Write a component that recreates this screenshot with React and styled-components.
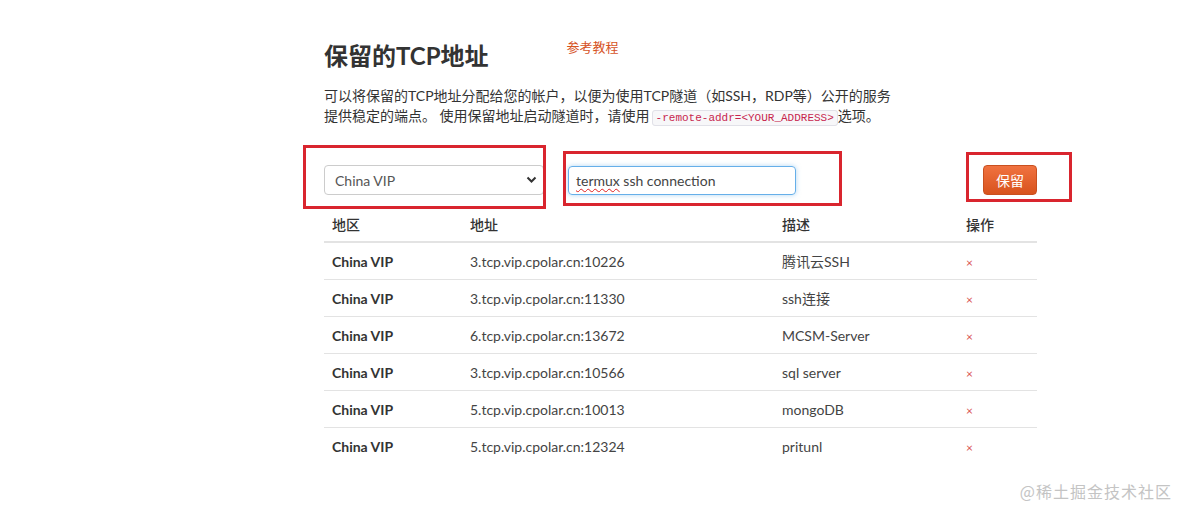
import React from 'react';
import styled, { createGlobalStyle } from 'styled-components';

const GlobalStyle = createGlobalStyle`
  html, body {
    margin: 0;
    padding: 0;
    background: #fff;
  }
  body {
    font-family: Lato, "Noto Sans CJK SC", sans-serif;
    color: #333;
  }
`;

const Page = styled.div`
  position: relative;
  width: 1184px;
  height: 509px;
  overflow: hidden;
  background: #fff;
`;

const Content = styled.div`
  width: 713px;
  margin-left: 324px;
  padding-top: 38px;
`;

// Title block
const TitleRow = styled.div`
  display: flex;
  align-items: flex-start;
  gap: 78px;
`;

const Title = styled.h1`
  margin: 0;
  font-size: 24px;
  font-weight: 700;
  line-height: 36px;
  color: #333;
`;

const GuideLink = styled.a`
  margin-top: -1px;
  font-size: 13px;
  color: #d6531f;
  text-decoration: none;
`;

const Intro = styled.p`
  margin: 12px 0 0;
  font-size: 14px;
  line-height: 20px;
  color: #333;
`;

const Code = styled.code`
  font-family: "Liberation Mono", monospace;
  font-size: 11px;
  color: #c7254e;
  background: #f7f7f9;
  border: 1px solid #e1e1e8;
  border-radius: 3px;
  padding: 1px 3px;
  margin-left: 2px;
`;

// Form row
const FormRow = styled.div`
  position: relative;
  display: flex;
  align-items: center;
  margin-top: 37px;
  height: 30px;
`;

const SelectBox = styled.div`
  position: relative;
  width: 220px;
  height: 30px;
  box-sizing: border-box;
  border: 1px solid #ccc;
  border-radius: 4px;
  display: flex;
  align-items: center;
  padding-left: 10px;
  font-size: 14px;
  color: #555;
`;

const Chevron = styled.svg`
  position: absolute;
  right: 6px;
  top: 10px;
`;

const FakeInput = styled.div`
  margin-left: 24px;
  width: 228px;
  height: 29px;
  box-sizing: border-box;
  border: 1px solid #66afe9;
  border-radius: 4px;
  box-shadow: 0 0 5px rgba(102, 175, 233, 0.5);
  display: flex;
  align-items: center;
  padding-left: 7px;
  font-size: 14px;
  color: #444;
`;

const Misspelled = styled.span`
  text-decoration: underline wavy #e02020;
  text-decoration-thickness: 1px;
  text-underline-offset: 2px;
`;

const SaveButton = styled.button`
  margin-left: auto;
  width: 54px;
  height: 30px;
  border: 1px solid #c9501f;
  border-radius: 4px;
  background: linear-gradient(#f07240, #d8531d);
  color: #fff;
  font-family: Lato, "Noto Sans CJK SC", sans-serif;
  font-size: 14px;
  cursor: pointer;
`;

// Red annotation frames drawn over the screenshot
const Frame = styled.div`
  position: absolute;
  border: 3px solid #d9252e;
  box-sizing: border-box;
  pointer-events: none;
`;

// Table
const Table = styled.table`
  width: 713px;
  margin-top: 12px;
  border-collapse: collapse;
  table-layout: fixed;
  font-size: 14px;
`;

const Th = styled.th`
  box-sizing: border-box;
  text-align: left;
  font-weight: 500;
  padding: 0 8px;
  height: 35px;
  vertical-align: middle;
  color: #333;
  border-bottom: 2px solid #e3e3e3;
  width: ${p => p.$w}px;
`;

const Td = styled.td`
  padding: 0 8px;
  height: 36px;
  vertical-align: middle;
  color: #444;
  font-weight: ${p => (p.$bold ? 700 : 400)};
  ${p => p.$bold && 'color: #333;'}
`;

const Tr = styled.tr`
  border-top: 1px solid #e3e3e3;
  &:first-child {
    border-top: none;
  }
`;

const Remove = styled.span`
  color: #d9534f;
  font-size: 12px;
`;

const Watermark = styled.div`
  position: absolute;
  right: 12px;
  bottom: 6px;
  font-size: 16px;
  letter-spacing: 1px;
  color: #c4c4c4;
  font-family: "Noto Sans CJK SC", sans-serif;
`;

const rows = [
  ['3.tcp.vip.cpolar.cn:10226', '腾讯云SSH'],
  ['3.tcp.vip.cpolar.cn:11330', 'ssh连接'],
  ['6.tcp.vip.cpolar.cn:13672', 'MCSM-Server'],
  ['3.tcp.vip.cpolar.cn:10566', 'sql server'],
  ['5.tcp.vip.cpolar.cn:10013', 'mongoDB'],
  ['5.tcp.vip.cpolar.cn:12324', 'pritunl'],
];

export default function App() {
  return (
    <Page>
      <GlobalStyle />
      <Content>
        <TitleRow>
          <Title>保留的TCP地址</Title>
          <GuideLink href="#">参考教程</GuideLink>
        </TitleRow>
        <Intro>
          可以将保留的TCP地址分配给您的帐户，以便为使用TCP隧道（如SSH，RDP等）公开的服务
          <br />
          提供稳定的端点。 使用保留地址启动隧道时，请使用<Code>-remote-addr=&lt;YOUR_ADDRESS&gt;</Code>选项。
        </Intro>

        <FormRow>
          <SelectBox>
            China VIP
            <Chevron width="11" height="8" viewBox="0 0 11 8">
              <path d="M1.5 1.5 L5.5 5.5 L9.5 1.5" fill="none" stroke="#333" strokeWidth="2" />
            </Chevron>
          </SelectBox>
          <FakeInput>
            <Misspelled>termux</Misspelled>&nbsp;ssh connection
          </FakeInput>
          <SaveButton>保留</SaveButton>

          <Frame style={{ left: -21, top: -20, width: 243, height: 64 }} />
          <Frame style={{ left: 239, top: -14, width: 279, height: 55 }} />
          <Frame style={{ left: 642, top: -13, width: 106, height: 50 }} />
        </FormRow>

        <Table>
          <thead>
            <tr>
              <Th $w={138}>地区</Th>
              <Th $w={312}>地址</Th>
              <Th $w={184}>描述</Th>
              <Th $w={79}>操作</Th>
            </tr>
          </thead>
          <tbody>
            {rows.map(([addr, desc]) => (
              <Tr key={addr}>
                <Td $bold>China VIP</Td>
                <Td>{addr}</Td>
                <Td>{desc}</Td>
                <Td>
                  <Remove>×</Remove>
                </Td>
              </Tr>
            ))}
          </tbody>
        </Table>
      </Content>
      <Watermark>@稀土掘金技术社区</Watermark>
    </Page>
  );
}
